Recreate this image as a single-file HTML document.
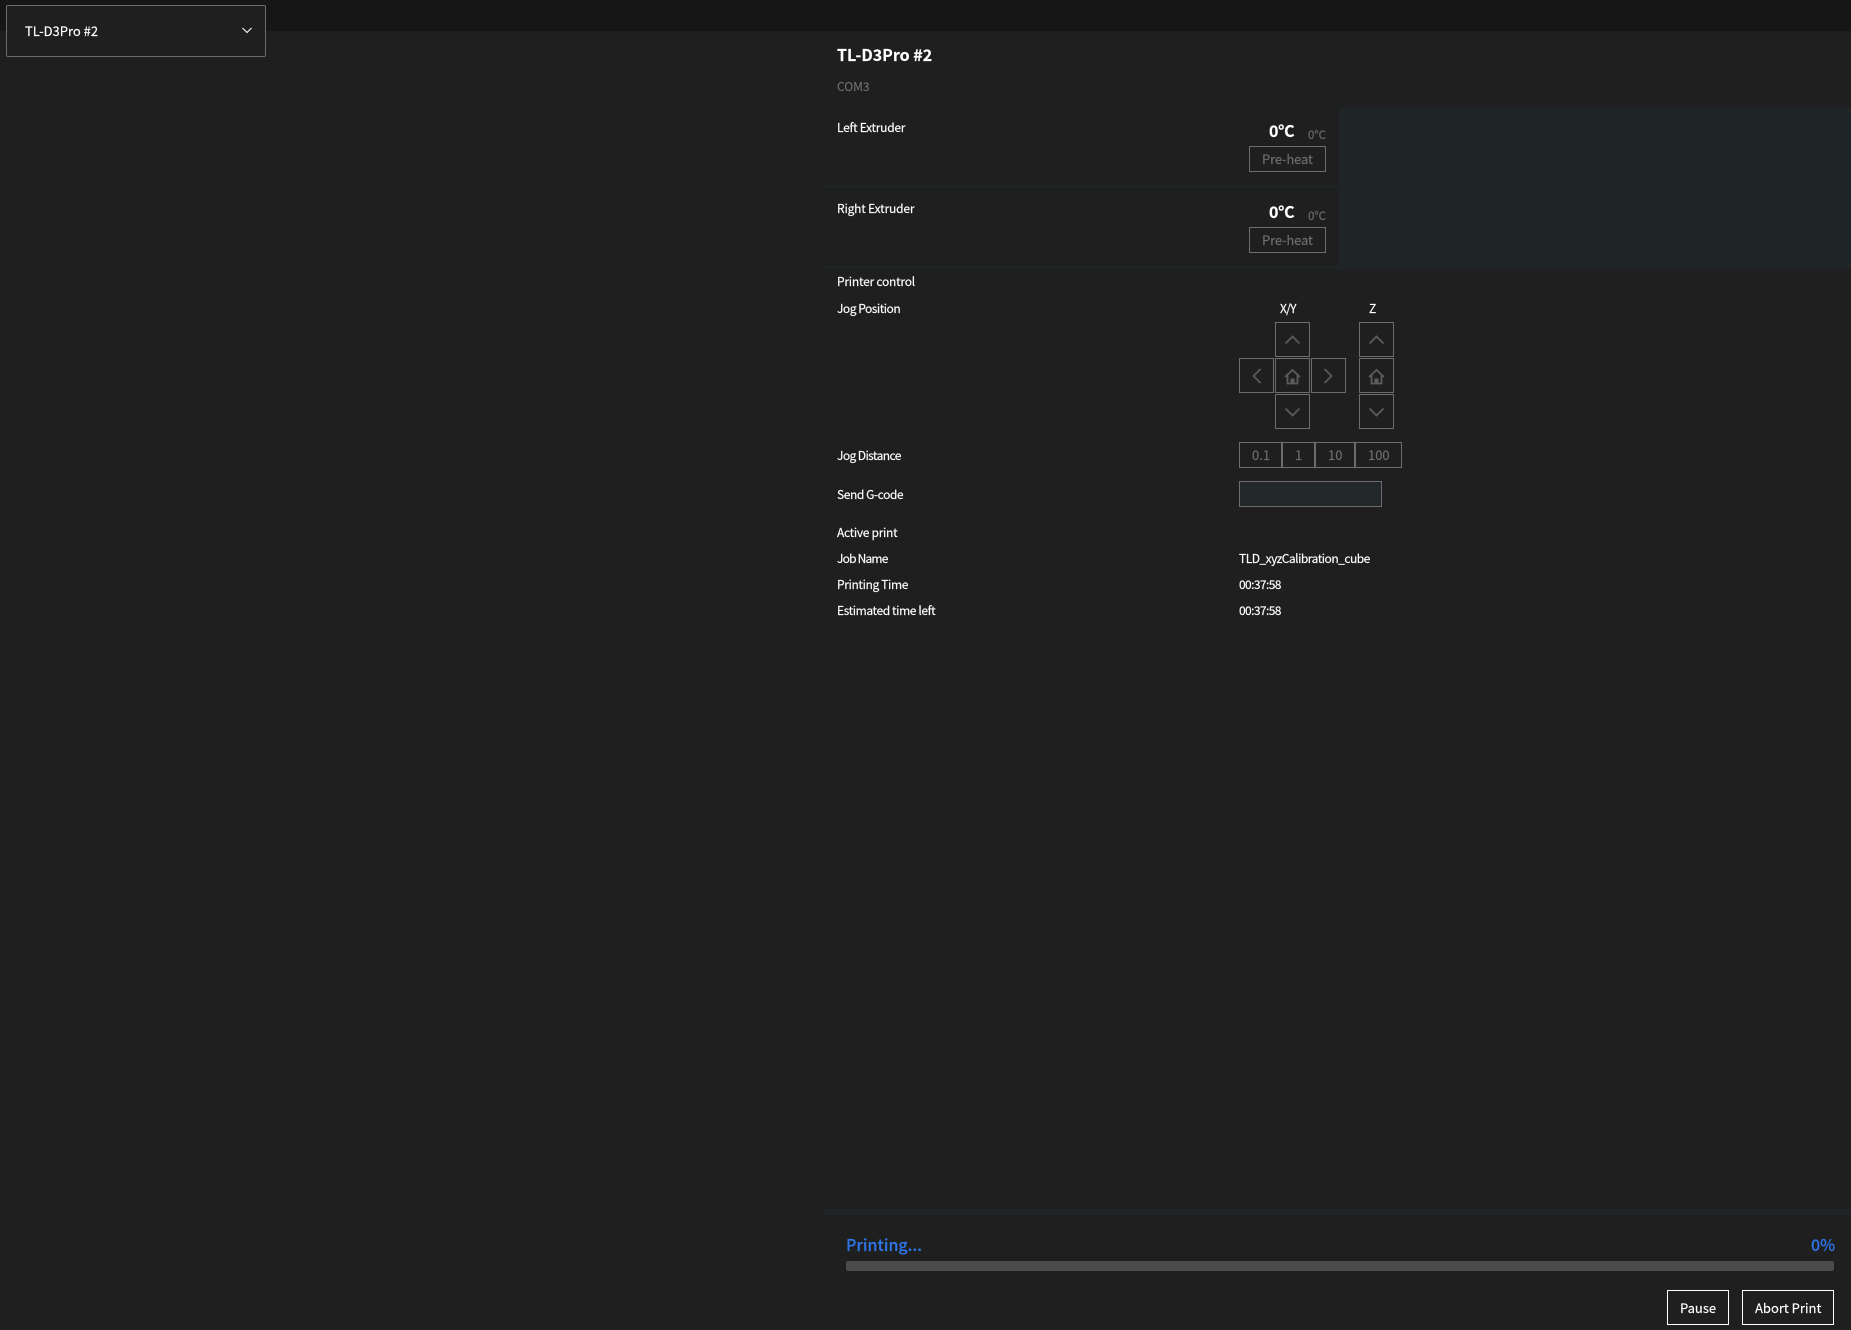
<!DOCTYPE html>
<html>
<head>
<meta charset="utf-8">
<style>
html,body{margin:0;padding:0;background:#1f1f1f;}
body{width:1851px;height:1330px;position:relative;overflow:hidden;font-family:"Noto Sans CJK JP","Liberation Sans",sans-serif;color:#fff;}
.r{position:absolute;box-sizing:border-box;}
.t{position:absolute;white-space:nowrap;line-height:20px;height:20px;font-size:12px;color:#fff;-webkit-text-stroke:0.15px currentColor;}
.b{position:absolute;box-sizing:border-box;border:1px solid #6d6d6d;}
.b svg{position:absolute;left:-1px;top:-1px;width:35px;height:35px;fill:none;stroke:#5c5c5c;stroke-width:1.8;}
.g{color:#6e6e6e;}
</style>
</head>
<body>
<div class="r" style="left:0;top:0;width:1851px;height:31px;background:#161616"></div>
<div class="r" style="left:6px;top:5px;width:260px;height:52px;background:#1f1f1f;border:1px solid #6d6d6d;border-radius:2px"></div>
<span class="t" style="left:25px;top:21px;font-size:13px">TL-D3Pro #2</span>
<svg class="r" style="left:240px;top:26px" width="14" height="9" fill="none" stroke="#fff" stroke-width="1.1"><path d="M2.500 2l4.500 4.500 4.500-4.500"/></svg>

<span class="t" style="left:837px;top:44px;font-size:16px;font-weight:700">TL-D3Pro #2</span>
<span class="t g" style="left:837px;top:77px">COM3</span>

<div class="r" style="left:1339px;top:107px;width:512px;height:161px;background:#1f2427"></div>
<div class="r" style="left:824px;top:185px;width:515px;height:3px;background:#1f2427"></div>
<div class="r" style="left:824px;top:266px;width:1027px;height:3px;background:#1f2427"></div>

<span class="t" style="left:837px;top:118px;letter-spacing:-.27px">Left Extruder</span>
<span class="t" style="left:1269px;top:120px;font-size:16px;font-weight:700;letter-spacing:-.4px">0°C</span>
<span class="t g" style="left:1308px;top:125px;font-size:11.500px">0°C</span>
<div class="b" style="left:1249px;top:146px;width:77px;height:26px"></div>
<span class="t g" style="left:1262px;top:149px;font-size:13px;letter-spacing:-.15px">Pre-heat</span>

<span class="t" style="left:837px;top:199px;letter-spacing:-.17px">Right Extruder</span>
<span class="t" style="left:1269px;top:201px;font-size:16px;font-weight:700;letter-spacing:-.4px">0°C</span>
<span class="t g" style="left:1308px;top:206px;font-size:11.500px">0°C</span>
<div class="b" style="left:1249px;top:227px;width:77px;height:26px"></div>
<span class="t g" style="left:1262px;top:230px;font-size:13px;letter-spacing:-.15px">Pre-heat</span>

<span class="t" style="left:837px;top:272px;letter-spacing:-.23px">Printer control</span>
<span class="t" style="left:837px;top:299px;letter-spacing:-.49px">Jog Position</span>
<span class="t" style="left:1280px;top:299px;letter-spacing:-.7px">X/Y</span>
<span class="t" style="left:1369px;top:299px">Z</span>

<div class="b" style="left:1275px;top:322px;width:35px;height:35px"><svg viewBox="0 0 35 35"><path d="M10.500 21.500l7-7 7 7"/></svg></div>
<div class="b" style="left:1239px;top:358px;width:35px;height:35px"><svg viewBox="0 0 35 35"><path d="M21.500 11l-7 7 7 7"/></svg></div>
<div class="b" style="left:1275px;top:358px;width:35px;height:35px"><svg viewBox="0 0 35 35"><path d="M10 19l7.500-7 7.500 7M12.500 17v8.500h10V17"/><path d="M15.500 25.500v-5h4v5z" fill="#5c5c5c" stroke="none"/></svg></div>
<div class="b" style="left:1311px;top:358px;width:35px;height:35px"><svg viewBox="0 0 35 35"><path d="M13.500 11l7 7-7 7"/></svg></div>
<div class="b" style="left:1275px;top:394px;width:35px;height:35px"><svg viewBox="0 0 35 35"><path d="M10.500 14.500l7 7 7-7"/></svg></div>
<div class="b" style="left:1359px;top:322px;width:35px;height:35px"><svg viewBox="0 0 35 35"><path d="M10.500 21.500l7-7 7 7"/></svg></div>
<div class="b" style="left:1359px;top:358px;width:35px;height:35px"><svg viewBox="0 0 35 35"><path d="M10 19l7.500-7 7.500 7M12.500 17v8.500h10V17"/><path d="M15.500 25.500v-5h4v5z" fill="#5c5c5c" stroke="none"/></svg></div>
<div class="b" style="left:1359px;top:394px;width:35px;height:35px"><svg viewBox="0 0 35 35"><path d="M10.500 14.500l7 7 7-7"/></svg></div>

<span class="t" style="left:837px;top:446px;letter-spacing:-.59px">Jog Distance</span>
<div class="b" style="left:1239px;top:442px;width:163px;height:26px"></div>
<div class="r" style="left:1281px;top:442px;width:2px;height:26px;background:#6d6d6d"></div>
<div class="r" style="left:1314px;top:442px;width:2px;height:26px;background:#6d6d6d"></div>
<div class="r" style="left:1354px;top:442px;width:2px;height:26px;background:#6d6d6d"></div>
<span class="t g" style="left:1252px;top:445px;font-size:13px">0.1</span>
<span class="t g" style="left:1295px;top:445px;font-size:13px">1</span>
<span class="t g" style="left:1328px;top:445px;font-size:13px">10</span>
<span class="t g" style="left:1368px;top:445px;font-size:13px">100</span>

<span class="t" style="left:837px;top:485px;letter-spacing:-.43px">Send G-code</span>
<div class="b" style="left:1239px;top:481px;width:143px;height:26px;background:#22272a"></div>

<span class="t" style="left:837px;top:523px;letter-spacing:-.3px">Active print</span>
<span class="t" style="left:837px;top:549px;letter-spacing:-.8px">Job Name</span>
<span class="t" style="left:1239px;top:549px;letter-spacing:-.5px">TLD_xyzCalibration_cube</span>
<span class="t" style="left:837px;top:575px;letter-spacing:-.36px">Printing Time</span>
<span class="t" style="left:1239px;top:575px;letter-spacing:-.6px">00:37:58</span>
<span class="t" style="left:837px;top:601px;letter-spacing:-.4px">Estimated time left</span>
<span class="t" style="left:1239px;top:601px;letter-spacing:-.6px">00:37:58</span>

<div class="r" style="left:824px;top:1209px;width:1027px;height:6px;background:#1f2427"></div>
<span class="t" style="left:846px;top:1234px;font-size:16px;font-weight:500;color:#2e75e6">Printing...</span>
<span class="t" style="left:1811px;top:1234px;font-size:16px;font-weight:500;color:#2e75e6">0%</span>
<div class="r" style="left:846px;top:1261px;width:988px;height:10px;background:#4b4b4b;border-radius:2px"></div>
<div class="r" style="left:1667px;top:1290px;width:62px;height:35px;border:1px solid #fff"></div>
<span class="t" style="left:1680px;top:1298px;font-size:13px">Pause</span>
<div class="r" style="left:1742px;top:1290px;width:92px;height:35px;border:1px solid #fff"></div>
<span class="t" style="left:1755px;top:1298px;font-size:13px">Abort Print</span>
</body>
</html>
